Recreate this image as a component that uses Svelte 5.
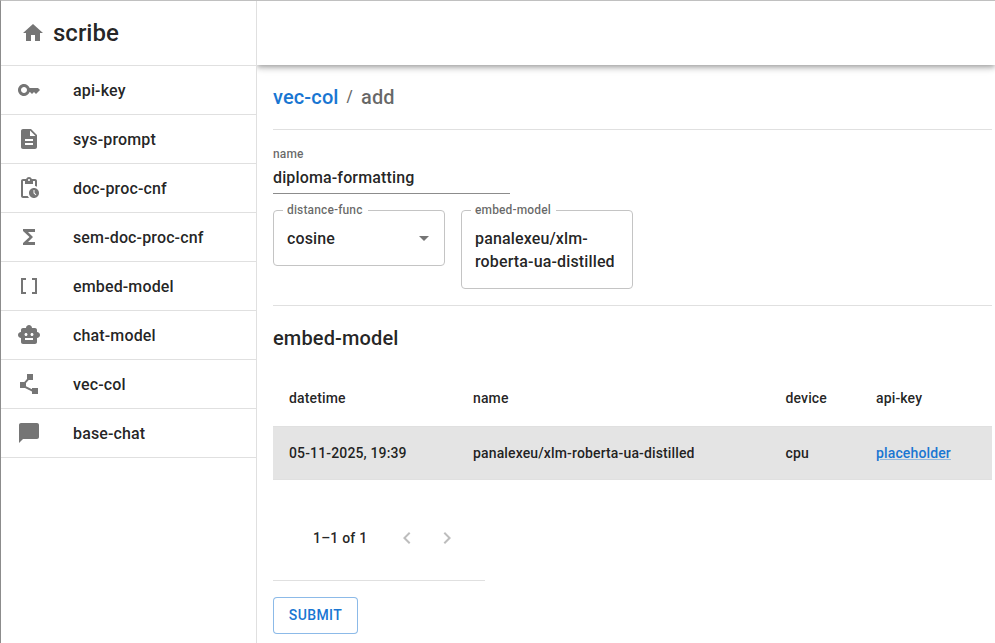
<script>
  const nav = [
    { label: 'api-key', d: 'M21 10h-8.35C11.83 7.67 9.61 6 7 6c-3.31 0-6 2.69-6 6s2.69 6 6 6c2.61 0 4.83-1.67 5.65-4H13l2 2 2-2 2 2 4-4.04zM7 15c-1.65 0-3-1.35-3-3s1.35-3 3-3 3 1.35 3 3-1.35 3-3 3' },
    { label: 'sys-prompt', d: 'M14 2H6c-1.1 0-1.99.9-1.99 2L4 20c0 1.1.89 2 1.99 2H18c1.1 0 2-.9 2-2V8zm2 16H8v-2h8zm0-4H8v-2h8zm-3-5V3.5L18.5 9z' },
    { label: 'doc-proc-cnf', d: 'M17 12c-2.76 0-5 2.24-5 5s2.24 5 5 5 5-2.24 5-5-2.24-5-5-5m1.65 7.35L16.5 17.2V14h1v2.79l1.85 1.85zM18 3h-3.18C14.4 1.84 13.3 1 12 1s-2.4.84-2.82 2H6c-1.1 0-2 .9-2 2v15c0 1.1.9 2 2 2h6.11c-.59-.57-1.07-1.25-1.42-2H6V5h2v3h8V5h2v5.08c.71.1 1.38.31 2 .6V5c0-1.1-.9-2-2-2m-6 2c-.55 0-1-.45-1-1s.45-1 1-1 1 .45 1 1-.45 1-1 1' },
    { label: 'sem-doc-proc-cnf', d: 'M18 4H6v2l6.5 6L6 18v2h12v-3h-7l5-5-5-5h7z' },
    { label: 'embed-model', d: 'M15 4v2h3v12h-3v2h5V4zM4 20h5v-2H6V6h3V4H4z' },
    { label: 'chat-model', d: 'M20 9V7c0-1.1-.9-2-2-2h-3c0-1.66-1.34-3-3-3S9 3.34 9 5H6c-1.1 0-2 .9-2 2v2c-1.66 0-3 1.34-3 3s1.34 3 3 3v4c0 1.1.9 2 2 2h12c1.1 0 2-.9 2-2v-4c1.66 0 3-1.34 3-3s-1.34-3-3-3M7.5 11.5c0-.83.67-1.5 1.5-1.5s1.5.67 1.5 1.5S9.83 13 9 13s-1.5-.67-1.5-1.5M16 17H8v-2h8zm-1-4c-.83 0-1.5-.67-1.5-1.5S14.17 10 15 10s1.5.67 1.5 1.5S15.83 13 15 13' },
    { label: 'vec-col', d: 'M15 16v1.26l-6-3v-3.17L11.7 8H16V2h-6v4.9L7.3 10H3v6h5l7 3.5V22h6v-6z' },
    { label: 'base-chat', d: 'M20 2H4c-1.1 0-2 .9-2 2v18l4-4h14c1.1 0 2-.9 2-2V4c0-1.1-.9-2-2-2' }
  ];
</script>

{#snippet icon(d)}
  <svg class="icon" viewBox="0 0 24 24" aria-hidden="true"><path {d} /></svg>
{/snippet}

<div class="app">
  <aside>
    <div class="brand">
      {@render icon('M10 20v-6h4v6h5v-8h3L12 3 2 12h3v8z')}
      <span>scribe</span>
    </div>
    <nav>
      {#each nav as item}
        <a class="item" href="#{item.label}">{@render icon(item.d)}<span>{item.label}</span></a>
      {/each}
    </nav>
  </aside>

  <div class="page">
    <header></header>
    <main>
      <div class="crumbs"><a href="#vec-col">vec-col</a><span class="sep">/</span><span>add</span></div>
      <section class="form">
        <div class="name">
          <label for="name">name</label>
          <input id="name" value="diploma-formatting" />
        </div>
        <div class="row">
          <fieldset>
            <legend>distance-func</legend>
            <div class="value">cosine{@render icon('M7 10l5 5 5-5z')}</div>
          </fieldset>
          <fieldset>
            <legend>embed-model</legend>
            <div class="value">panalexeu/xlm-roberta-ua-distilled</div>
          </fieldset>
        </div>
      </section>

      <h2>embed-model</h2>
      <table>
        <thead>
          <tr><th class="c1">datetime</th><th class="c2">name</th><th class="c3">device</th><th>api-key</th></tr>
        </thead>
        <tbody>
          <tr><td>05-11-2025, 19:39</td><td>panalexeu/xlm-roberta-ua-distilled</td><td>cpu</td><td><a href="#placeholder">placeholder</a></td></tr>
        </tbody>
      </table>
      <div class="pager">
        <span>1–1 of 1</span>
        <div class="arrows">
          {@render icon('M15.41 7.41L14 6l-6 6 6 6 1.41-1.41L10.83 12z')}
          {@render icon('M10 6L8.59 7.41 13.17 12l-4.58 4.59L10 18l6-6z')}
        </div>
      </div>
      <button>SUBMIT</button>
    </main>
  </div>
</div>

<style>
  :global(body) { background: #fff; overflow: hidden; }
  .app, .app * { box-sizing: border-box; }
  .app {
    display: flex;
    width: 995px;
    height: 643px;
    overflow: hidden;
    border-top: 1px solid #c0c0c0;
    border-left: 1px solid #8c8c8c;
    font: 500 16px/24px Roboto, sans-serif;
    letter-spacing: 0.14px;
    color: rgba(0, 0, 0, 0.87);
  }
  .icon { width: 24px; height: 24px; flex: none; fill: #757575; }
  aside { width: 256px; flex: none; border-right: 1px solid #e0e0e0; }
  .brand {
    display: flex;
    align-items: center;
    gap: 8px;
    height: 65px;
    padding-left: 20px;
    border-bottom: 1px solid #e0e0e0;
    font-size: 24px;
    letter-spacing: 0;
  }
  .item {
    display: flex;
    align-items: center;
    gap: 32px;
    height: 49px;
    padding-left: 16px;
    border-bottom: 1px solid #e0e0e0;
    color: inherit;
    text-decoration: none;
  }
  .item span { padding-top: 2px; }
  .page { flex: 1; min-width: 0; }
  header {
    height: 64px;
    box-shadow: 0 2px 4px -1px rgba(0, 0, 0, 0.2), 0 4px 5px 0 rgba(0, 0, 0, 0.14), 0 1px 10px 0 rgba(0, 0, 0, 0.12);
    clip-path: inset(0 0 -20px 0);
  }
  main { padding: 16px 3px 0 16px; }
  .crumbs {
    display: flex;
    height: 49px;
    border-bottom: 1px solid #e0e0e0;
    font-size: 20px;
    line-height: 32px;
    color: rgba(0, 0, 0, 0.6);
  }
  .sep { margin: 0 8px; font-size: 16px; }
  a { color: #1976d2; text-decoration: none; }
  .form { height: 176px; padding-top: 16px; border-bottom: 1px solid #e0e0e0; }
  .name {
    display: flex;
    flex-direction: column;
    width: 237px;
    height: 48px;
    border-bottom: 1px solid #8c8c8c;
  }
  label { height: 20px; font-size: 12px; line-height: 16px; color: rgba(0, 0, 0, 0.6); }
  input {
    height: 23px;
    padding: 0;
    border: 0;
    outline: 0;
    background: none;
    font: inherit;
    letter-spacing: inherit;
    color: inherit;
  }
  .row { display: flex; align-items: flex-start; gap: 16px; margin-top: 8px; }
  fieldset {
    width: 172px;
    min-width: 0;
    margin: 0;
    padding: 8px 13px 15px 9px;
    border: 1px solid #c4c4c4;
    border-radius: 4px;
  }
  legend { height: 17px; padding: 0 5px 0 4px; font-size: 12px; line-height: 17px; color: rgba(0, 0, 0, 0.6); }
  .value { display: flex; justify-content: space-between; padding-left: 4px; line-height: 23px; }
  .value .icon { margin: -1px -5px 0 0; }
  h2 { height: 32px; margin: 16px 0; font: inherit; font-size: 20px; line-height: 32px; }
  table {
    width: 719px;
    table-layout: fixed;
    border-collapse: separate;
    border-spacing: 0;
    font-size: 14px;
  }
  th, td { padding: 0 16px; border-bottom: 1px solid #e0e0e0; font-weight: 500; text-align: left; white-space: nowrap; }
  th { height: 57px; }
  td { height: 53px; background: #e4e4e4; }
  td a { text-decoration: underline; text-decoration-color: rgba(25, 118, 210, 0.4); }
  .c1 { width: 184px; }
  .c2 { width: 312.5px; }
  .c3 { width: 90.5px; }
  .pager {
    display: flex;
    align-items: center;
    width: 212px;
    height: 101px;
    padding: 16px 0 0 40px;
    border-bottom: 1px solid #e0e0e0;
    font-size: 14px;
    letter-spacing: 0.2px;
  }
  .arrows { display: flex; gap: 16px; margin-left: 27.5px; }
  .arrows .icon { fill: #bdbdbd; }
  button {
    width: 85px;
    height: 37px;
    margin-top: 16px;
    padding: 0 0 2px;
    border: 1px solid rgba(25, 118, 210, 0.5);
    border-radius: 4px;
    background: #fff;
    color: #1976d2;
    font: 500 14px/24px Roboto, sans-serif;
    letter-spacing: 0.4px;
  }
</style>
